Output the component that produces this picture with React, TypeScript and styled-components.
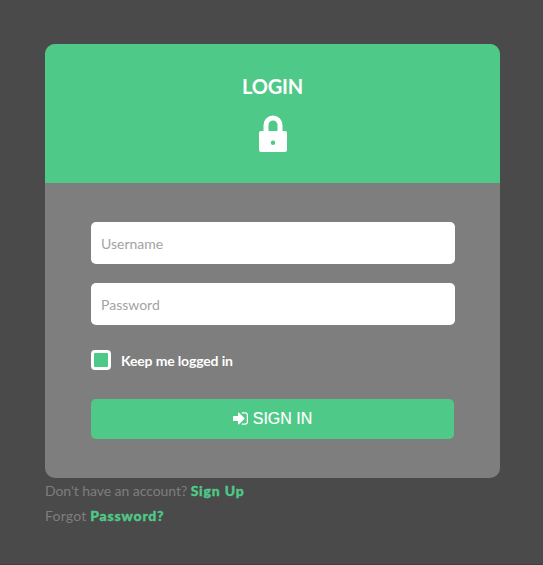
import React from "react";
import styled, { createGlobalStyle } from "styled-components";

const GlobalStyle = createGlobalStyle`
  * { box-sizing: border-box; }
  body { margin: 0; background: #4a4a4a; font-family: Lato, sans-serif; }
`;

const Page = styled.main`
  min-height: 565px;
  padding: 44px 43px 0 45px;
  background: #4a4a4a;
  border-bottom: 1px solid #3f3f3f;
`;

const Card = styled.form`
  height: 434px;
  border-radius: 10px;
  overflow: hidden;
  background: #7e7e7e;
`;

const Header = styled.header`
  height: 139px;
  padding-top: 30px;
  background: #4fc987;
  color: #fff;
  display: flex;
  flex-direction: column;
  align-items: center;
`;

const Title = styled.h1`
  margin: 0;
  font-size: 20px;
  line-height: 24px;
  font-weight: 700;
  letter-spacing: -0.2px;
`;

const LockIcon = styled.svg`
  width: 28px;
  height: 37px;
  margin-top: 17px;
  fill: #fff;
`;

const Body = styled.div`
  padding: 39px 45px 0 46px;
  display: flex;
  flex-direction: column;
`;

const Field = styled.input`
  height: 42px;
  margin-bottom: 19px;
  padding: 0 10px;
  border: 0;
  border-radius: 5px;
  outline: none;
  background: #fff;
  color: #555;
  font: 400 14px Lato, sans-serif;
  &::placeholder { color: #a3a3a3; opacity: 1; }
`;

const Remember = styled.label`
  display: flex;
  align-items: center;
  gap: 10px;
  height: 20px;
  margin-top: 6px;
  color: #fff;
  font-size: 14px;
  font-weight: 700;
  letter-spacing: -0.15px;
`;

const CheckBox = styled.input`
  appearance: none;
  width: 20px;
  height: 20px;
  margin: 0;
  border: 3px solid #fff;
  border-radius: 4px;
  background: #fff;
  &:checked { background: #4fc987; }
`;

const RememberText = styled.span`
  padding-top: 1px;
`;

const SubmitButton = styled.button`
  height: 40px;
  margin: 29px 1px 0 0;
  padding: 0;
  border: 0;
  border-radius: 5px;
  display: flex;
  align-items: center;
  justify-content: center;
  gap: 5px;
  background: #4fc987;
  color: #fff;
  font: 400 16px "Liberation Sans", Arial, sans-serif;
  -webkit-text-stroke: 0.2px #fff;
`;

const SignInIcon = styled.svg`
  width: 15px;
  height: 13px;
  margin-bottom: 2px;
  fill: #fff;
`;

const Links = styled.footer`
  color: #7e7e7e;
  font-size: 14px;
  line-height: 25px;
`;

const LinkLine = styled.p<{ $tracking: number }>`
  margin: 0;
  letter-spacing: ${({ $tracking }) => $tracking}px;
`;

const Link = styled.a`
  color: #4fc987;
  font-weight: 900;
  letter-spacing: 0.8px;
  -webkit-text-stroke: 0.35px #4fc987;
  text-decoration: none;
`;

export default function App() {
  return (
    <>
      <GlobalStyle />
      <Page>
        <Card onSubmit={(e: React.FormEvent) => e.preventDefault()}>
          <Header>
            <Title>LOGIN</Title>
            <LockIcon viewBox="0 0 28 37">
              <path
                fillRule="evenodd"
                d="M2 16H4.500V10a9.500 9.500 0 0 1 19 0v6H26a2 2 0 0 1 2 2V35a2 2 0 0 1-2 2H2a2 2 0 0 1-2-2V18a2 2 0 0 1 2-2ZM9.500 16h9V10a4.500 4.500 0 0 0-9 0ZM14 25.500a2.200 2.200 0 1 0 0 4.400 2.200 2.200 0 0 0 0-4.400Z"
              />
            </LockIcon>
          </Header>
          <Body>
            <Field type="text" placeholder="Username" />
            <Field type="password" placeholder="Password" />
            <Remember>
              <CheckBox type="checkbox" defaultChecked />
              <RememberText>Keep me logged in</RememberText>
            </Remember>
            <SubmitButton type="submit">
              <SignInIcon viewBox="0 0 1536 1280">
                <path d="M1184 640q0 26-19 45l-544 544q-19 19-45 19t-45-19-19-45v-288h-448q-26 0-45-19t-19-45v-384q0-26 19-45t45-19h448v-288q0-26 19-45t45-19 45 19l544 544q19 19 19 45zm352-352v704q0 119-84.500 203.500t-203.500 84.500h-320q-13 0-22.500-9.500t-9.500-22.500q0-4-1-20t-.5-26.500 3-23.500 10-19.500 20.500-6.500h320q66 0 113-47t47-113v-704q0-66-47-113t-113-47h-312l-11.500-1-11.500-3-8-5.500-7-9-2-13.500q0-4-1-20t-.5-26.500 3-23.500 10-19.500 20.500-6.500h320q119 0 203.500 84.500t84.500 203.500z" />
              </SignInIcon>
              SIGN IN
            </SubmitButton>
          </Body>
        </Card>
        <Links>
          <LinkLine $tracking={-0.06}>
            Don't have an account? <Link href="#">Sign Up</Link>
          </LinkLine>
          <LinkLine $tracking={0.2}>
            Forgot <Link href="#">Password?</Link>
          </LinkLine>
        </Links>
      </Page>
    </>
  );
}
